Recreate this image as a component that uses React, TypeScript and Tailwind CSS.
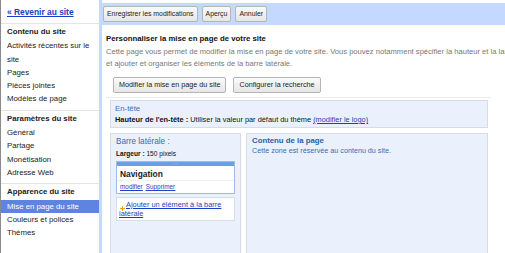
import { Plus } from 'lucide-react'

const navSections = [
  {
    title: 'Contenu du site',
    items: ['Activités récentes sur le site', 'Pages', 'Pièces jointes', 'Modèles de page'],
  },
  {
    title: 'Paramètres du site',
    items: ['Général', 'Partage', 'Monétisation', 'Adresse Web'],
  },
  {
    title: 'Apparence du site',
    items: ['Mise en page du site', 'Couleurs et polices', 'Thèmes'],
  },
]

function GreyButton({ label, className = '' }: { label: string; className?: string }) {
  return (
    <button
      className={`rounded-[2px] border border-[#b5b5b5] bg-gradient-to-b from-[#fafafa] to-[#e6e6e6] leading-none text-[#222] ${className}`}
    >
      {label}
    </button>
  )
}

function Sidebar() {
  return (
    <aside className="w-[99px] shrink-0 border-l border-l-[#8a8a8a] bg-white text-[7.8px] text-[#222]">
      <div className="px-[6px] pt-[6px] pb-[4px] leading-[13px]">
        <a className="text-[8.4px] font-bold text-[#1a3dc1] underline">« Revenir au site</a>
      </div>
      {navSections.map((s, i) => (
        <div key={s.title} className={`border-t border-[#e4e4e4] pt-[1px] ${i < 2 ? 'pb-[4px]' : ''}`}>
          <div className="px-[6px] font-bold leading-[13.3px]">{s.title}</div>
          <ul className="mt-[1px]">
            {s.items.map((it) => (
              <li
                key={it}
                className={`px-[6px] leading-[13.3px] ${it === 'Mise en page du site' ? 'bg-[#5f83e0] text-white' : ''}`}
              >
                {it}
              </li>
            ))}
          </ul>
        </div>
      ))}
    </aside>
  )
}

export default function App() {
  return (
    <div className="flex h-[253px] w-[505px] overflow-hidden bg-white font-['Liberation_Sans',Arial,sans-serif]">
      <Sidebar />
      <main className="flex min-w-0 flex-1 flex-col overflow-hidden border-l-[3px] border-[#c3d9ff]">
        {/* barre d'outils */}
        <div className="mt-[3px] flex h-[22px] shrink-0 items-center gap-[4px] bg-[#c3d9ff] pl-[1px]">
          <GreyButton label="Enregistrer les modifications" className="h-[16px] px-[3px] text-[6.9px]" />
          <GreyButton label="Aperçu" className="h-[16px] px-[3px] text-[6.9px]" />
          <GreyButton label="Annuler" className="h-[16px] px-[3px] text-[6.9px]" />
        </div>

        <div className="flex flex-col pl-[4px] pt-[8px]">
          <h1 className="text-[7.8px] font-bold leading-[12px] text-[#111]">Personnaliser la mise en page de votre site</h1>
          <p className="mt-[1px] whitespace-nowrap text-[7.6px] leading-[12px] text-[#777]">
            Cette page vous permet de modifier la mise en page de votre site. Vous pouvez notamment spécifier la hauteur et la largeur de l'en-tête et de la barre latérale,
            <br />
            et ajouter et organiser les éléments de la barre latérale.
          </p>
          <div className="mt-[7px] flex gap-[7px] pl-[7px]">
            <GreyButton label="Modifier la mise en page du site" className="h-[16px] px-[5px] text-[7.2px]" />
            <GreyButton label="Configurer la recherche" className="h-[16px] px-[5px] text-[7.2px]" />
          </div>

          <div className="mt-[4px] mr-[14px] border-t border-[#ececec] pl-[4px] pr-[3px] pt-[2px]">
            <div className="flex h-[28px] flex-col justify-center border border-[#d6dde8] bg-[#eaf1fd] px-[4px]">
              <div className="text-[7.8px] leading-[11px] text-[#3a6cb0]">En-tête</div>
              <div className="text-[7.4px] leading-[11px] text-[#111]">
                <b>Hauteur de l'en-tête :</b> Utiliser la valeur par défaut du thème{' '}
                <a className="text-[#1a3dc1] underline">(modifier le logo)</a>
              </div>
            </div>

            <div className="mt-[5px] flex h-[140px] gap-[5px]">
              <div className="flex w-[131px] shrink-0 flex-col border border-[#d6dde8] bg-[#eaf1fd] px-[5px] pt-[2px]">
                <div className="text-[8.2px] leading-[12px] text-[#3a6cb0]">Barre latérale :</div>
                <div className="text-[6.6px] leading-[11px] text-[#111]">
                  <b>Largeur :</b> 150 pixels
                </div>
                <div className="mt-[2px] border border-[#9fbbe3] bg-white">
                  <div className="flex h-[4px] items-center justify-center bg-[#6e9de0] text-[4px] leading-none tracking-[0.5px] text-white">
                    ····
                  </div>
                  <div className="px-[3px] pt-[2px] text-[8.4px] font-bold leading-[12px] text-[#222]">Navigation</div>
                  <div className="flex gap-[3px] border-t border-[#f0f0f0] px-[3px] pb-[1px] text-[6.4px] leading-[11px] text-[#2a3fbf] underline">
                    <a>modifier</a>
                    <a>Supprimer</a>
                  </div>
                </div>
                <div className="mt-[3px] flex border border-[#d8dde6] bg-white px-[2px] py-[2px]">
                  <span className="relative text-[7.4px] leading-[9px] text-[#1a3dc1] underline">
                    <Plus className="absolute left-0 top-[5px] h-[7px] w-[7px] text-[#e3a21a]" strokeWidth={3.5} />
                    <span className="pl-[7px]">Ajouter un élément à la barre</span>
                    <br />
                    latérale
                  </span>
                </div>
              </div>
              <div className="flex flex-1 flex-col border border-[#d6dde8] bg-[#eaf1fd] px-[5px] pt-[2px]">
                <div className="text-[7.8px] font-bold leading-[10px] text-[#2d5d9d]">Contenu de la page</div>
                <div className="text-[7.2px] leading-[9px] text-[#3a6cb0]">Cette zone est réservée au contenu du site.</div>
              </div>
            </div>
          </div>
        </div>
      </main>
    </div>
  )
}
